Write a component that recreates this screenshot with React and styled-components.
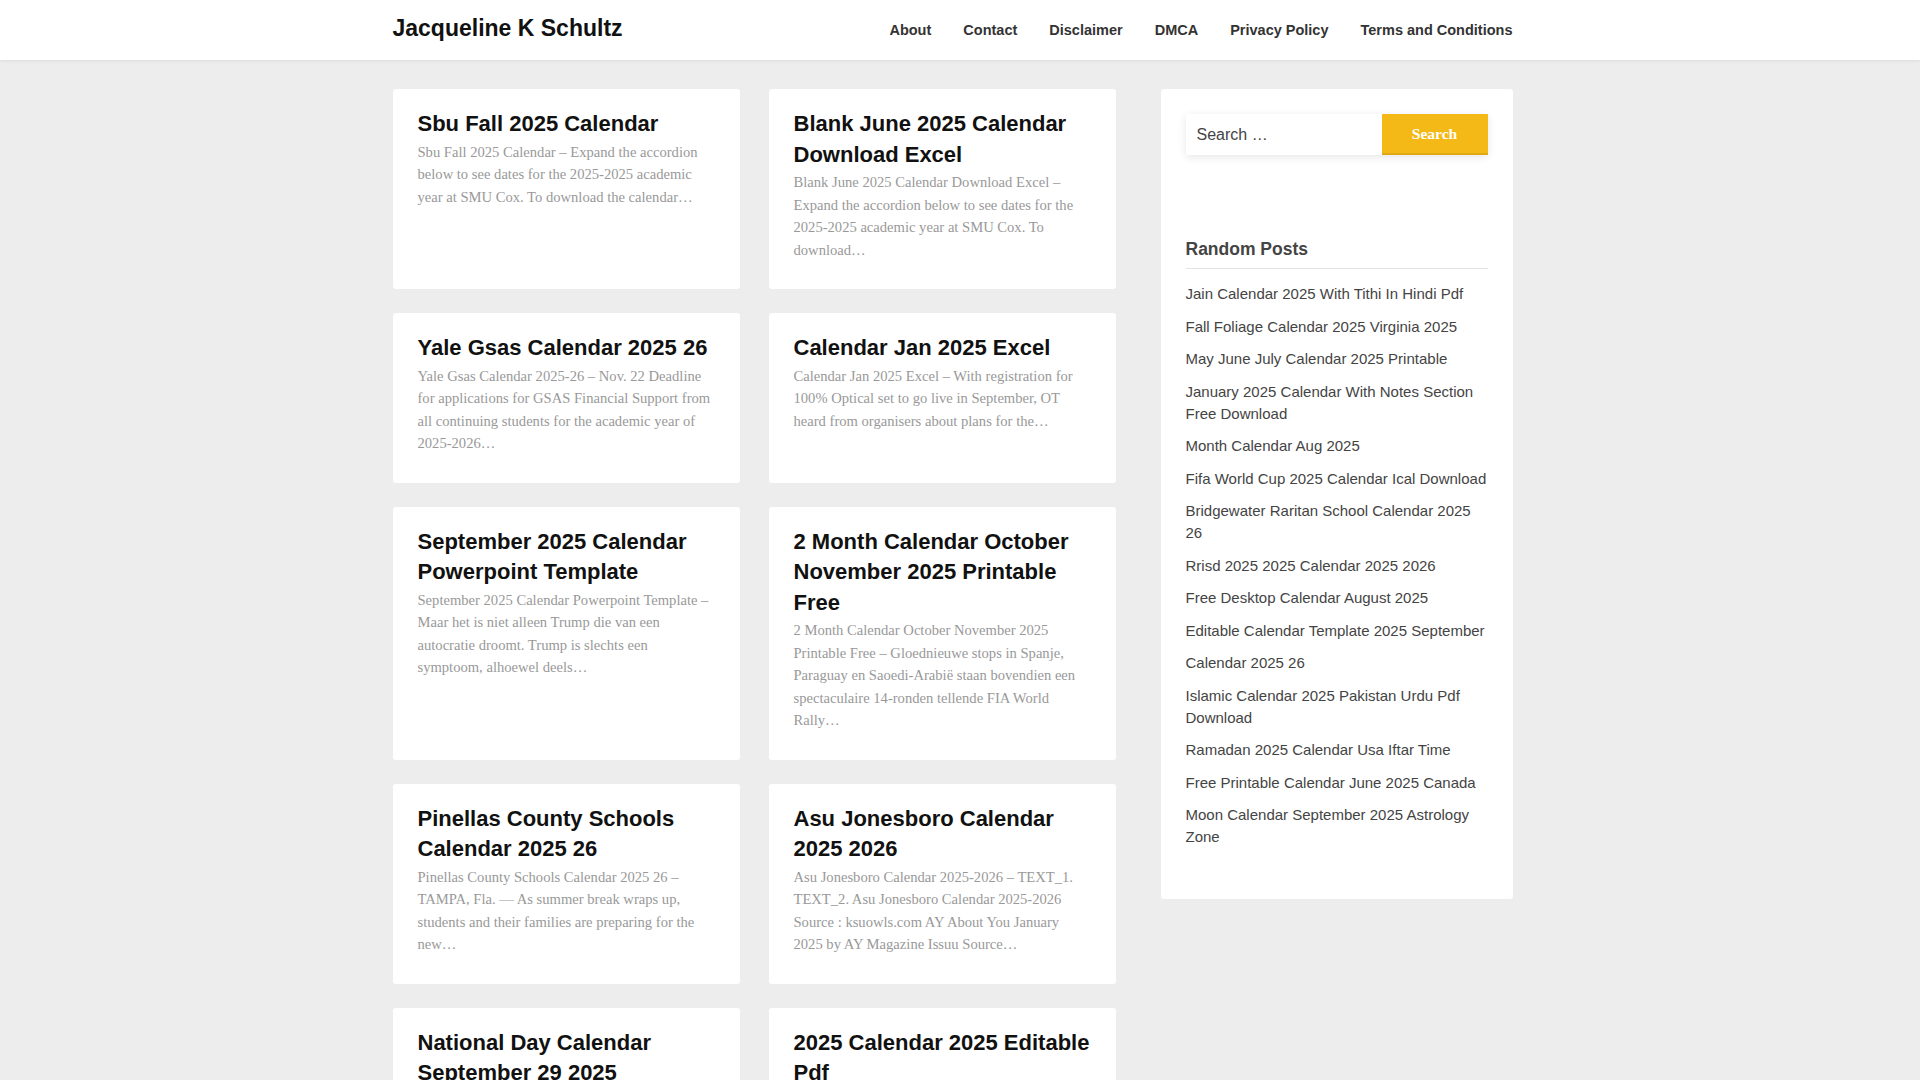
import React from "react";
import styled, { createGlobalStyle } from "styled-components";

const Global = createGlobalStyle`
  body{margin:0;padding-right:15px;background:#ededed;font-family:"Liberation Sans",Arial,sans-serif;}
  a{text-decoration:none;color:inherit;}
`;
const Header = styled.header`background:#fff;height:60px;margin-right:-15px;padding-right:15px;box-shadow:0 1px 3px rgba(0,0,0,.08);`;
const Inner = styled.div`width:1120px;margin:0 auto;`;
const HeadRow = styled(Inner)`display:flex;justify-content:space-between;align-items:center;height:60px;`;
const Brand = styled.a`font-size:23px;font-weight:700;color:#111;margin-top:-4px;`;
const Nav = styled.nav`display:flex;margin-right:-16px;`;
const NavItem = styled.a`font-size:14.5px;font-weight:700;color:#333;padding:0 16px;`;
const Main = styled(Inner)`display:flex;gap:45px;padding-top:29px;align-items:flex-start;`;
const Grid = styled.div`width:723px;display:grid;grid-template-columns:347px 347px;column-gap:29px;row-gap:24px;`;
const Card = styled.article`background:#fff;border-radius:3px;padding:20px 25px 28px;`;
const Title = styled.h2`margin:0 0 1px;font-size:22px;line-height:30.5px;font-weight:700;color:#111;`;
const Excerpt = styled.p`margin:0;font-family:"Liberation Serif","Times New Roman",serif;font-size:14.6px;line-height:22.5px;color:#999;`;
const Side = styled.aside`width:353px;background:#fff;border-radius:3px;padding:25px 25px 40px;box-sizing:border-box;`;
const SearchBox = styled.form`display:flex;height:41px;box-shadow:0 2px 8px rgba(0,0,0,.1);border-radius:2px;`;
const Input = styled.div`flex:1;font-size:16px;color:#444;padding:0 11px;display:flex;align-items:center;`;
const Btn = styled.div`width:106px;background:#f4b916;border-bottom:2px solid #e0a812;color:#fff;font-family:"Liberation Serif",serif;font-weight:700;font-size:15.5px;display:flex;align-items:center;justify-content:center;box-sizing:border-box;padding-top:1px;`;
const WTitle = styled.h3`margin:84px 0 0;font-size:17.5px;color:#444;padding-bottom:8px;border-bottom:1px solid #e3e3e3;`;
const List = styled.ul`list-style:none;margin:14px 0 0;padding:0;`;
const Li = styled.li`font-size:15px;line-height:22px;color:#444;margin-bottom:10.5px;`;

const posts = [
  ["Sbu Fall 2025 Calendar","Sbu Fall 2025 Calendar – Expand the accordion below to see dates for the 2025-2025 academic year at SMU Cox. To download the calendar…"],
  ["Blank June 2025 Calendar Download Excel","Blank June 2025 Calendar Download Excel – Expand the accordion below to see dates for the 2025-2025 academic year at SMU Cox. To download…"],
  ["Yale Gsas Calendar 2025 26","Yale Gsas Calendar 2025-26 – Nov. 22 Deadline for applications for GSAS Financial Support from all continuing students for the academic year of 2025-2026…"],
  ["Calendar Jan 2025 Excel","Calendar Jan 2025 Excel – With registration for 100% Optical set to go live in September, OT heard from organisers about plans for the…"],
  ["September 2025 Calendar Powerpoint Template","September 2025 Calendar Powerpoint Template – Maar het is niet alleen Trump die van een autocratie droomt. Trump is slechts een symptoom, alhoewel deels…"],
  ["2 Month Calendar October November 2025 Printable Free","2 Month Calendar October November 2025 Printable Free – Gloednieuwe stops in Spanje, Paraguay en Saoedi-Arabië staan bovendien een spectaculaire 14-ronden tellende FIA World Rally…"],
  ["Pinellas County Schools Calendar 2025 26","Pinellas County Schools Calendar 2025 26 – TAMPA, Fla. — As summer break wraps up, students and their families are preparing for the new…"],
  ["Asu Jonesboro Calendar 2025 2026","Asu Jonesboro Calendar 2025-2026 – TEXT_1. TEXT_2. Asu Jonesboro Calendar 2025-2026 Source : ksuowls.com AY About You January 2025 by AY Magazine Issuu Source…"],
  ["National Day Calendar September 29 2025","National Day Calendar September 29 2025 – …"],
  ["2025 Calendar 2025 Editable Pdf","2025 Calendar 2025 Editable Pdf – …"],
];
const random = ["Jain Calendar 2025 With Tithi In Hindi Pdf","Fall Foliage Calendar 2025 Virginia 2025","May June July Calendar 2025 Printable","January 2025 Calendar With Notes Section Free Download","Month Calendar Aug 2025","Fifa World Cup 2025 Calendar Ical Download","Bridgewater Raritan School Calendar 2025 26","Rrisd 2025 2025 Calendar 2025 2026","Free Desktop Calendar August 2025","Editable Calendar Template 2025 September","Calendar 2025 26","Islamic Calendar 2025 Pakistan Urdu Pdf Download","Ramadan 2025 Calendar Usa Iftar Time","Free Printable Calendar June 2025 Canada","Moon Calendar September 2025 Astrology Zone"];

export default function App(){
  return <>
    <Global/>
    <Header><HeadRow>
      <Brand href="#">Jacqueline K Schultz</Brand>
      <Nav>{["About","Contact","Disclaimer","DMCA","Privacy Policy","Terms and Conditions"].map(n=><NavItem key={n} href="#">{n}</NavItem>)}</Nav>
    </HeadRow></Header>
    <Main>
      <Grid>{posts.map(([t,e])=><Card key={t}><Title>{t}</Title><Excerpt>{e}</Excerpt></Card>)}</Grid>
      <Side>
        <SearchBox><Input>Search …</Input><Btn>Search</Btn></SearchBox>
        <WTitle>Random Posts</WTitle>
        <List>{random.map(r=><Li key={r}>{r}</Li>)}</List>
      </Side>
    </Main>
  </>;
}
